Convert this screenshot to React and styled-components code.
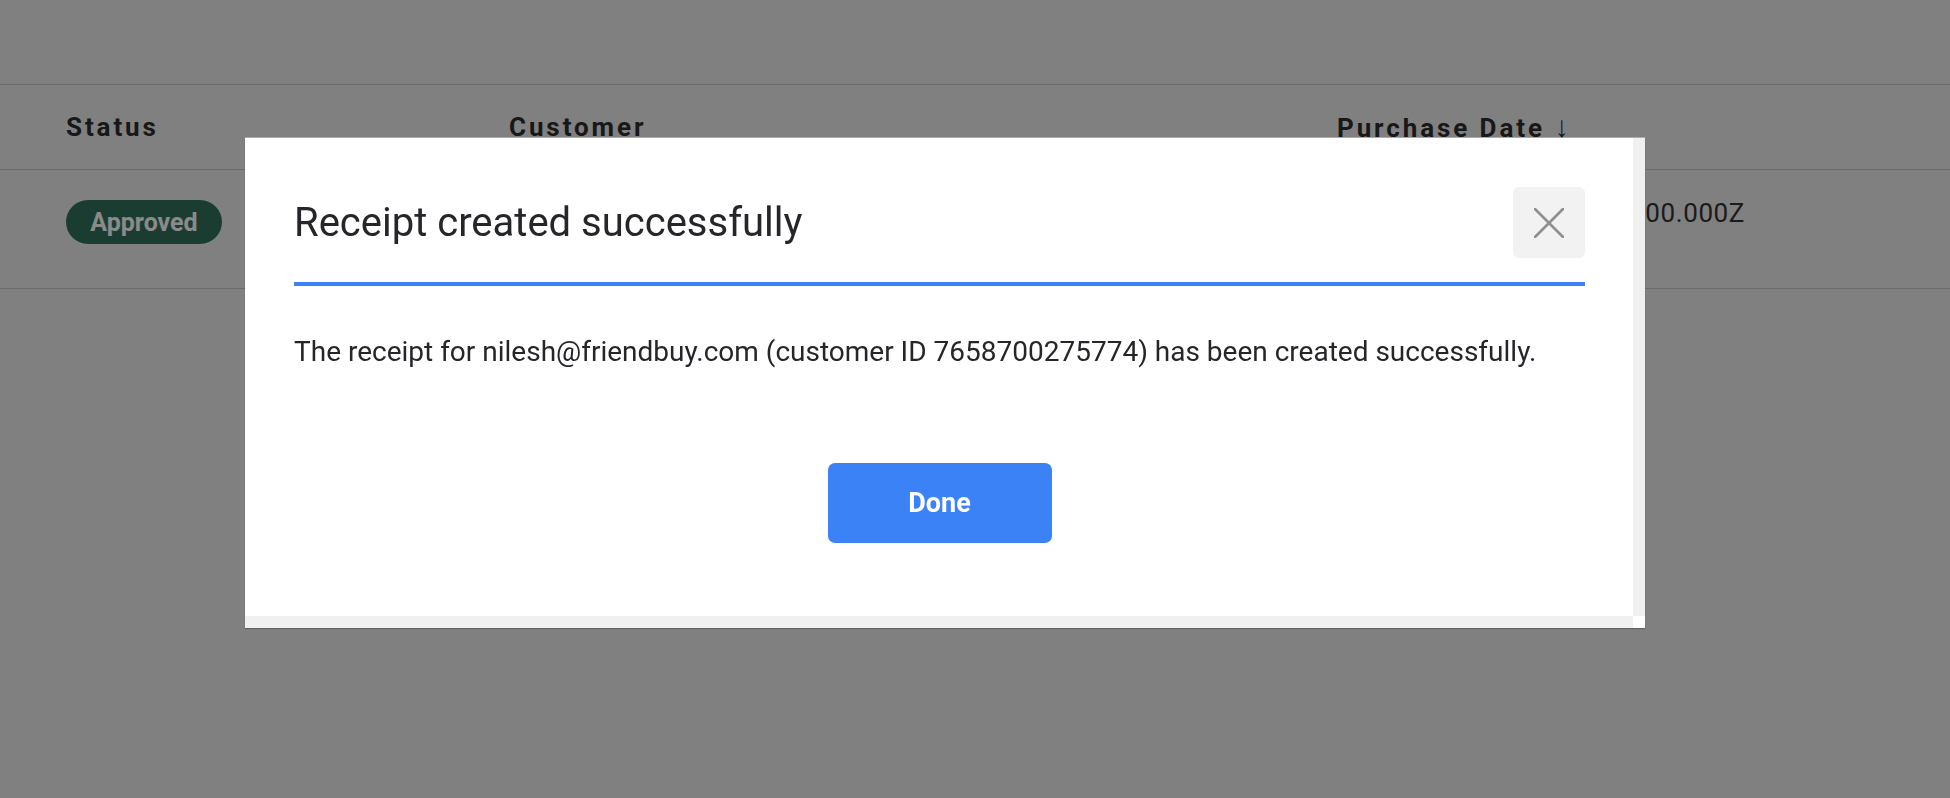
import React from "react";
import styled, { createGlobalStyle } from "styled-components";

const Global = createGlobalStyle`
  html, body { margin: 0; padding: 0; }
  body {
    font-family: Roboto, "Noto Sans", "Liberation Sans", sans-serif;
    background: #ececec;
    width: 1950px;
    height: 798px;
    overflow: hidden;
  }
  * { box-sizing: border-box; }
`;

const Page = styled.div`
  width: 1950px;
  height: 798px;
  padding-top: 84px;
  background: #ececec;
`;

const Table = styled.div`
  border-top: 1px solid #c8c8c8;
`;

const Row = styled.div`
  display: grid;
  grid-template-columns: 443px 828px 408px 1fr;
  padding-left: 66px;
  height: ${(p) => p.$h}px;
  align-items: ${(p) => (p.$top ? "start" : "center")};
  padding-top: ${(p) => p.$pt || 0}px;
  border-bottom: 1px solid #c8c8c8;
`;

const HeadCell = styled.div`
  font-size: 26px;
  font-weight: 700;
  letter-spacing: 2.9px;
  color: #2e2e2e;
  white-space: nowrap;
`;

const Arrow = styled.span`
  display: inline-block;
  font-size: 30px;
  font-weight: 400;
  line-height: 1;
  transform: scaleX(0.9);
`;

const Cell = styled.div`
  font-size: 26px;
  letter-spacing: 0.6px;
  color: #333;
  line-height: 36px;
  text-align: ${(p) => p.$align || "left"};
  margin-top: ${(p) => p.$mt || 0}px;
`;

const Badge = styled.span`
  display: inline-flex;
  align-items: center;
  justify-content: center;
  width: 156px;
  height: 44px;
  border-radius: 22px;
  background: #32715b;
  color: #ffffff;
  font-size: 25px;
  font-weight: 700;
`;

const Overlay = styled.div`
  position: fixed;
  inset: 0;
  background: rgba(0, 0, 0, 0.46);
`;

const Dialog = styled.div`
  position: absolute;
  left: 245px;
  top: 138px;
  width: 1400px;
  height: 490px;
  background: #fff;
  display: grid;
  grid-template-columns: 1fr 12px;
  grid-template-rows: 1fr 12px;
  box-shadow: 0 1px 1px rgba(0, 0, 0, 0.25), 0 -1px 0 rgba(255, 255, 255, 0.35);
`;

const Content = styled.div`
  padding: 49px 48px 0 49px;
  display: flex;
  flex-direction: column;
`;

const Header = styled.div`
  display: flex;
  align-items: center;
  justify-content: space-between;
`;

const Title = styled.h2`
  margin: 0;
  font-size: 40px;
  font-weight: 400;
  color: #25262a;
`;

const CloseButton = styled.button`
  width: 72px;
  height: 71px;
  border: none;
  border-radius: 6px;
  background: #f2f2f2;
  display: flex;
  align-items: center;
  justify-content: center;
  padding: 0;
  cursor: pointer;
`;

const Divider = styled.div`
  margin-top: 24px;
  height: 4px;
  background: #3b82f6;
`;

const Message = styled.p`
  margin: 45px 0 0;
  font-size: 28px;
  line-height: 42px;
  color: #25262a;
`;

const Footer = styled.div`
  display: flex;
  justify-content: center;
  margin-top: 90px;
`;

const DoneButton = styled.button`
  width: 224px;
  height: 80px;
  border: none;
  border-radius: 7px;
  background: #3b82f6;
  color: #fff;
  font-family: Roboto, "Noto Sans", sans-serif;
  font-size: 27px;
  font-weight: 700;
  cursor: pointer;
`;

const Track = styled.div`
  background: #f0f0f0;
`;

const Corner = styled.div`
  background: #fff;
`;

export default function App() {
  return (
    <>
      <Global />
      <Page>
        <Table>
          <Row $h={85}>
            <HeadCell>Status</HeadCell>
            <HeadCell>Customer</HeadCell>
            <HeadCell>
              Purchase Date <Arrow>↓</Arrow>
            </HeadCell>
            <div />
          </Row>
          <Row $h={119} $top $pt={30}>
            <div>
              <Badge>Approved</Badge>
            </div>
            <div />
            <Cell $align="right" $mt={-5}>2024-05-14T00:00:00.000Z</Cell>
            <div />
          </Row>
        </Table>
      </Page>
      <Overlay>
        <Dialog role="dialog">
          <Content>
            <Header>
              <Title>Receipt created successfully</Title>
              <CloseButton aria-label="Close">
                <svg width="30" height="30" viewBox="0 0 30 30">
                  <path d="M1 1 L29 29 M29 1 L1 29" stroke="#8f8f8f" strokeWidth="2.6" strokeLinecap="round" />
                </svg>
              </CloseButton>
            </Header>
            <Divider />
            <Message>
              The receipt for nilesh@friendbuy.com (customer ID 7658700275774) has been created successfully.
            </Message>
            <Footer>
              <DoneButton>Done</DoneButton>
            </Footer>
          </Content>
          <Track />
          <Track />
          <Corner />
        </Dialog>
      </Overlay>
    </>
  );
}
